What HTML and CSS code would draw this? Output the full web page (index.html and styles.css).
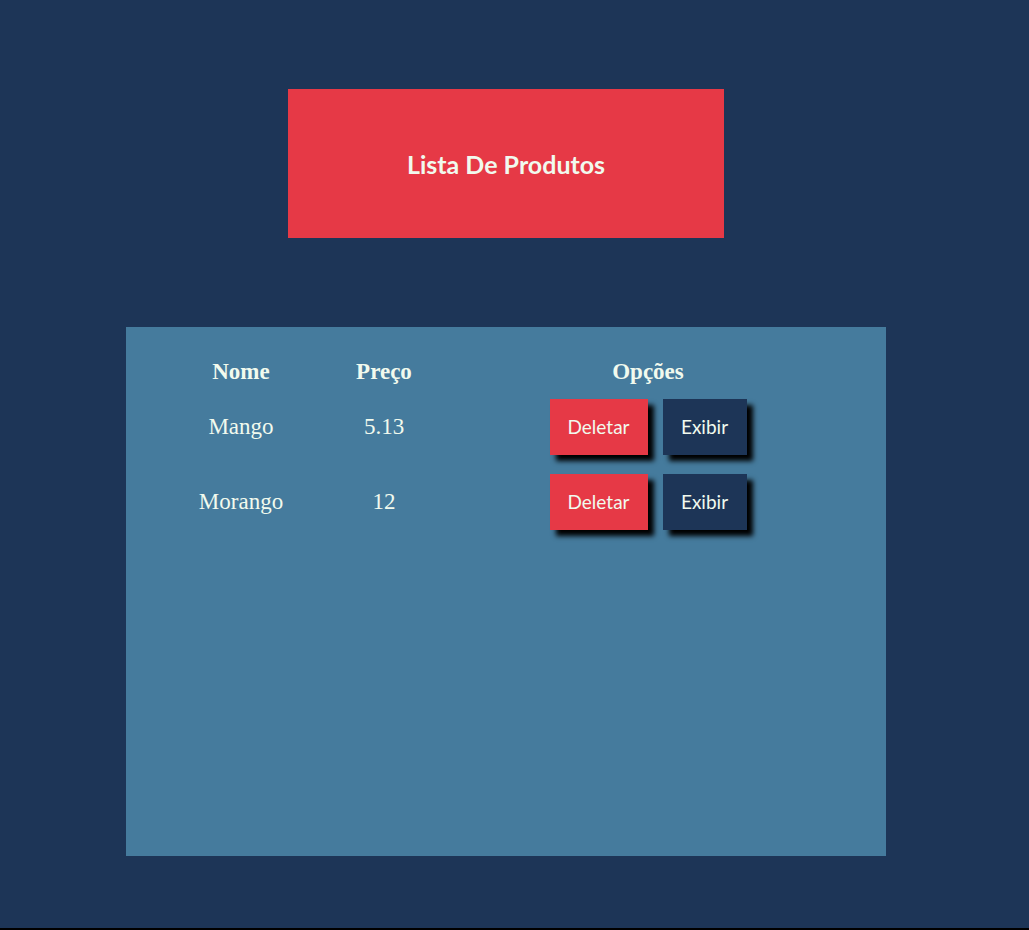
FILE: index.html
```html
<!DOCTYPE html>
<html lang="pt">
<head>
<meta charset="utf-8">
<title>Lista De Produtos</title>
<link rel="stylesheet" href="styles.css">
</head>
<body>
<div class="page">
  <header class="title-box">
    <h1 class="title">Lista De Produtos</h1>
  </header>
  <section class="panel">
    <div class="grid">
      <div class="cell head">Nome</div>
      <div class="cell head">Preço</div>
      <div class="cell head">Opções</div>

      <div class="cell row">Mango</div>
      <div class="cell row">5.13</div>
      <div class="cell row actions">
        <button class="btn btn-del">Deletar</button>
        <button class="btn btn-show">Exibir</button>
      </div>

      <div class="cell row">Morango</div>
      <div class="cell row">12</div>
      <div class="cell row actions">
        <button class="btn btn-del">Deletar</button>
        <button class="btn btn-show">Exibir</button>
      </div>
    </div>
  </section>
</div>
</body>
</html>
```

FILE: styles.css
```css
html {
  background: #000;
}
body {
  margin: 0;
  height: 928px;
  background: #1d3557;
  font-family: "Liberation Serif", "Times New Roman", serif;
  color: #f1faee;
}
.page {
  width: 1012px;
  padding-top: 89px;
  display: flex;
  flex-direction: column;
  align-items: center;
}
.title-box {
  width: 436px;
  height: 149px;
  background: #e63946;
  display: flex;
  align-items: center;
  justify-content: center;
}
.title {
  margin: 0;
  font-family: "Comic Sans MS", "Lato", sans-serif;
  font-weight: 700;
  font-size: 25px;
  color: #f1faee;
}
.panel {
  margin-top: 89px;
  width: 760px;
  height: 529px;
  box-sizing: border-box;
  background: #457b9d;
  padding: 28px 0 0 50px;
}
.grid {
  display: grid;
  grid-template-columns: 130px 156px 372px;
  grid-template-rows: 34px 75px 75px;
}
.cell {
  display: flex;
  align-items: center;
  justify-content: center;
  font-size: 23px;
}
.head {
  font-weight: 700;
}
.actions {
  gap: 15px;
}
.btn {
  height: 56px;
  padding: 0;
  border: none;
  font-family: "Comic Sans MS", "Lato", sans-serif;
  font-size: 19px;
  color: #f1faee;
  box-shadow: 6px 6px 5px #000;
  cursor: pointer;
}
.btn-del {
  width: 98px;
  background: #e63946;
}
.btn-show {
  width: 84px;
  background: #1d3557;
}
```
